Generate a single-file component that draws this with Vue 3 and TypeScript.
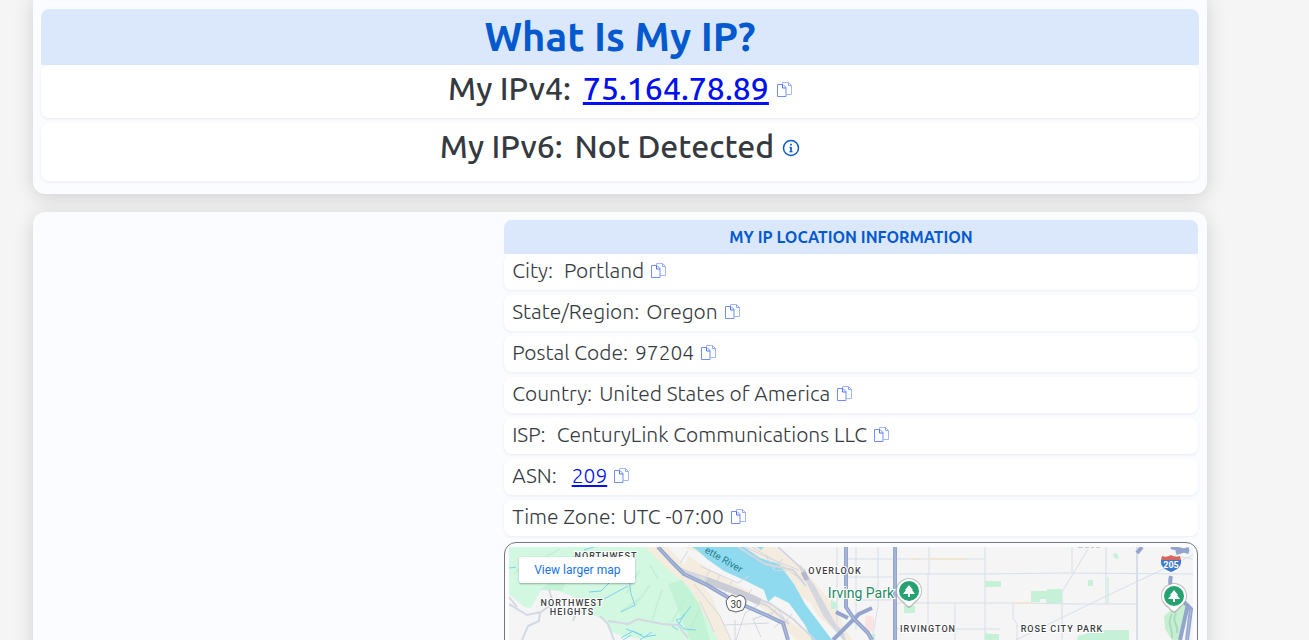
<script setup lang="ts">
interface InfoRow {
  label: string
  value: string
  href?: string
  wide?: boolean
}

const rows: InfoRow[] = [
  { label: 'City:', value: 'Portland', wide: true },
  { label: 'State/Region:', value: 'Oregon' },
  { label: 'Postal Code:', value: '97204' },
  { label: 'Country:', value: 'United States of America' },
  { label: 'ISP:', value: 'CenturyLink Communications LLC', wide: true },
  { label: 'ASN:', value: '209', href: '#asn' },
  { label: 'Time Zone:', value: 'UTC -07:00' },
]

function copy(text: string): void {
  navigator.clipboard?.writeText(text)
}
</script>

<template>
  <main class="page">
    <section class="card summary">
      <h1 class="title">What Is My IP?</h1>
      <div class="ip-row">
        <span>My IPv4:</span>
        <a class="ip" href="#ipv4">75.164.78.89</a>
        <button class="copy" type="button" aria-label="Copy IPv4" @click="copy('75.164.78.89')">
          <svg width="15" height="15" viewBox="0 0 15 15" fill="none" stroke="#7d9bff">
            <path d="M5.500 2V.5h6l3 3v9H9.500" stroke="#a4b8ff" />
            <path d="M11.500.5v3h3" stroke="#8ea8ff" />
            <path d="M.5 2.500H6l3 3v9H.5z" stroke="#6f90fb" />
            <path d="M5.500 3v3H9" stroke="#4d74f8" />
          </svg>
        </button>
      </div>
      <div class="ip-row tall">
        <span>My IPv6:</span>
        <span class="ip">Not Detected</span>
        <button class="copy info" type="button" aria-label="About IPv6">
          <svg width="18" height="18" viewBox="0 0 18 18" fill="none" stroke="#0a5ad0">
            <circle cx="9" cy="9" r="7.500" stroke-width="1.500" />
            <path d="M9 4.800v1.700M9 8v5" stroke-width="1.700" />
            <path d="M7.500 8.200H9M7.300 12.800h3.400" stroke-width="1" />
          </svg>
        </button>
      </div>
    </section>

    <section class="card details">
      <div class="aside"></div>
      <div class="info-col">
        <h2 class="subtitle">MY IP LOCATION INFORMATION</h2>
        <div class="rows">
          <div v-for="row in rows" :key="row.label" class="row">
            <span :class="['label', { wide: row.wide, linked: row.href }]">{{ row.label }}</span>
            <a v-if="row.href" class="asn" :href="row.href">{{ row.value }}</a>
            <span v-else>{{ row.value }}</span>
            <button class="copy" type="button" :aria-label="'Copy ' + row.label" @click="copy(row.value)">
              <svg width="15" height="15" viewBox="0 0 15 15" fill="none" stroke="#7d9bff">
                <path d="M5.500 2V.5h6l3 3v9H9.500" stroke="#a4b8ff" />
                <path d="M11.500.5v3h3" stroke="#8ea8ff" />
                <path d="M.5 2.500H6l3 3v9H.5z" stroke="#6f90fb" />
                <path d="M5.500 3v3H9" stroke="#4d74f8" />
              </svg>
            </button>
          </div>
        </div>

        <div class="map-frame">
          <svg class="map" viewBox="509 547 684 450" preserveAspectRatio="xMinYMin slice" role="img" aria-label="Map of Portland">
            <rect x="509" y="547" width="684" height="450" fill="#f5f5f6" />

            <!-- West hills -->
            <path d="M509 547H655L672 571 690 582 724 640V997H646V640L623 636 610 632 605 621 592 614 588 605 574 597 562 592 549 588 541 590 531 608 524 607 509 594Z" fill="#d3f8e2" />
            <path d="M645 547H668L700 582 712 597 730 640H718L690 588 665 567Z" fill="#f5ece0" />
            <path d="M646 640C642 629 659 630 680 620L716 640Z" fill="#d3f8e2" />
            <path d="M540 590 549 583 566 583 562 591ZM668 584 682 580 700 605 710 640H690Z" fill="#baf0d1" opacity=".65" />
            <g fill="none" stroke="#bfe9d0" stroke-width="2" opacity=".6">
              <path d="M528 560l-14 14M560 549l-18 10M640 570l-14 24M650 585l-16 22M662 590l-10 30M640 598l-20 14M625 560l12 16M650 565l8 14M684 600l-12 22M699 610l-10 22" />
            </g>
            <g fill="none" stroke="#79d2ea" stroke-width="1">
              <path d="M584 550l13-4M573 557l10-2M509 568l7-1M589 592l12-1 17-17 10-2 3-6M604 599l24-13M628 572l3 22 4 11-14 7M621 638l12-7 11 6 12-2M626 629l16 6M691 606l-9 12-6 2M684 614l-6 12M676 620l8 9 12 1" />
              <path d="M672 626l6 4M623 640l8-5M640 640l12-8" />
            </g>
            <g fill="none" stroke="#d3d8e4" stroke-width="2">
              <path d="M509 604l18 11 14-3 12-9-4-14M540 612l-1 9-11 5-6 14M509 597l8 10M588 606l-11 4-4 11M600 616l8 8 6 16M608 621l20 3 10-5 24 5 16 1 10 13" />
            </g>

            <!-- River and industrial banks -->
            <path d="M683 547H775L813 580 834 606 852 640H845L818 616 810 602 789 591 770 579ZM688 556l30 18 46 26 50 40h-17l-42-38-30-13-42-20Z" fill="#f5ece0" />
            <path d="M692 547H744L760 558 779 564 794 584 805 604 832 640H812L805 625 789 603 775 596 768 602 764 590 746 581 724 571 707 559 697 550Z" fill="#8fdaee" />
            <path d="M757 547h7l-3 3z" fill="#8fdaee" />
            <g fill="none" stroke="#d4d7df" stroke-width="2">
              <path d="M676 566l27 14 30 11 36 12 24 16 22 21M680 569l24 8 33 17 31 12 21 18M738 547l27 17 28 6 13 16M778 547l23 21 12 18 17 35" />
              <path d="M700 566l38 17 11-7M688 551l-8 12M710 570l-7 12M733 580l-9 14M752 589l-8 11M745 547l26 12 28 11M752 547l30 18 22 17M766 556l8 14 13 1M783 559l-10 10M795 573l8 7M720 575l-4 8M760 604l-15 9-9 27M774 612l-21 7 8 18M724 625l45-2M735 620v20M771 615l6-7 7 10-10 10M785 623l7-9M694 584l26 32 11 24M700 601l14 31" stroke-width="1" />
              <path d="M800 566l25 50 20 24M803 569l25 50 14 14M812 584l22 40 10 12" stroke-width="3" />
              <path d="M706 580l34 13 20 9" stroke="#c9ccd5" stroke-width="7" />
              <path d="M803 572l4 8" stroke="#b3b9cb" stroke-width="5" />
            </g>

            <!-- Street grid -->
            <g fill="none" stroke="#d6dfe9" stroke-width="1">
              <path d="M837 547V632M856 547V630M878 547V606L872 640M898 574H985L1065 573 1193 574M846 559H985M895 603H1021L1076 604H1136M928 574V630M929 547v27M985 547V640M955 604V640M1072 547V572M1106 547V604M1062 605V640M846 577H894M855 600h36M895 629H1000" />
              <path d="M1137 547V640" stroke-width="2" />
              <path d="M1088 549L1062 592V605M1016 640L1094 602 1193 555M1013 603V618L1017 624V640M1174 556l19 3" />
              <path d="M1108 577V603" stroke="#bdecd0" />
              <path d="M909 559h12M926 559h40M1012 603h22" stroke="#efe7d5" stroke-width="2" />
            </g>
            <g fill="#c6f0d7">
              <path d="M904 606h11v7h-11zM985 581h16v6h-16zM985 633l5 1h9v6h-14zM869 634h6v6h-6zM831 600l6 3v6h-6zM1031 591h16v-2h15v14h-16v-4h-6v3h-9zM1113 554l4-1 2 6-5-1zM1088 580h5v6h-5zM1077 640l1-4 21-6h30v10z" />
            </g>
            <path d="M866 615l8 2v14l-10 1z" fill="#fbe3e1" />
            <path d="M1170 611l17-8-6 37h-9l-7-11-1-13z" fill="#c6efd1" />
            <path d="M1172 614c-6 10 1 12 0 24M1176 613c-5 9 3 12 1 20" fill="none" stroke="#abd9c2" stroke-width="2" />

            <!-- Highways -->
            <g fill="none" stroke="#93a5cd" stroke-width="4" stroke-linejoin="round">
              <path d="M658 547l13 14 13 13 23 11 27 16 32 14 17 8 5 17M846 547v60l8 12 14 14 4 7M895 547v93M836 612l12 6M872 608l-13 6-26 26M1171 576c-3 12 3 17 8 21l12 12-4 31M1180 640l8-36" />
              <path d="M1171 547l18 5M1176 553l13-4M1137 553l5-6" />
            </g>
            <g fill="none" stroke="#b5c2df" stroke-width="1">
              <path d="M658 547l13 14 13 13 23 11 27 16 32 14 17 8 5 17M846 547v60l8 12 14 14 4 7M895 547v93M1191 609l-4 31" />
            </g>

            <!-- Shields -->
            <path d="M729 597l3-2 4 2 4-2 4 2 2 4-1 5-2 4-7 2-7-2-2-4-1-5z" fill="#fff" stroke="#5c6066" />
            <text x="736" y="608" class="shield">30</text>
            <path d="M1162 556c3 1 6 1 9-1 3 2 6 2 9 1l1 4h-20z" fill="#d9655c" />
            <path d="M1161 560h20c1 7-5 10-10 12-5-2-11-5-10-12z" fill="#3f7bcb" />
            <text x="1171" y="568" class="shield interstate">205</text>

            <!-- Park pins -->
            <g v-for="pin in [[909, 591], [1174, 596]]" :key="pin[0]" :transform="`translate(${pin[0]} ${pin[1]})`">
              <path d="M0 17c-2 0-4-3-6-5C-10 9-13 5-13 0a13 13 0 0126 0c0 5-3 9-7 12-2 2-4 5-6 5z" fill="#a6aaa9" opacity=".7" />
              <path d="M0 15c-2 0-3-2-5-4C-9 8-12 5-12 0a12 12 0 0124 0c0 5-3 8-7 11-2 2-3 4-5 4z" fill="#fff" />
              <circle r="10" fill="#25a26f" />
              <path d="M0-6l4 5H3l3 4H1v3h-2V3h-5l3-4h-1z" fill="#fff" />
            </g>

            <text x="606" y="559" class="area">NORTHWEST</text>
            <text x="572" y="606" class="area">NORTHWEST</text>
            <text x="572" y="615" class="area">HEIGHTS</text>
            <text x="835" y="574" class="area">OVERLOOK</text>
            <text x="928" y="632" class="area">IRVINGTON</text>
            <text x="1062" y="632" class="area">ROSE CITY PARK</text>
            <text x="894" y="598" class="park">Irving Park</text>
            <text class="river" transform="translate(704 552) rotate(30)">ette River</text>
            <path d="M1078 547h5M1085 547h4M1091 547h3M1096 547h4" stroke="#9a9da1" stroke-width="1" />
          </svg>
          <a class="larger" href="#map">View larger map</a>
        </div>
      </div>
    </section>
  </main>
</template>

<style>
body {
  background: #f5f5f5;
}
</style>

<style scoped>
.page {
  box-sizing: border-box;
  height: 100vh;
  overflow: hidden;
  padding: 0 102px 0 33px;
  font-family: Ubuntu, "Open Sans", "Noto Sans", sans-serif;
  color: #343a40;
}
.card {
  padding: 8px;
  background: #fbfcff;
  border-radius: 12px;
  box-shadow: 0 4px 20px rgba(0, 0, 0, 0.15);
}
.summary {
  margin-top: -8px;
  padding: 17px 8px 13px;
}
.title,
.subtitle {
  margin: 0;
  background: #dbe8fb;
  color: #0459cf;
  font-weight: 700;
  text-align: center;
  border-radius: 8px 8px 0 0;
}
.title {
  font-size: 40px;
  line-height: 56px;
}
.ip-row {
  display: flex;
  align-items: center;
  justify-content: center;
  height: 53px;
  padding-bottom: 7px;
  box-sizing: border-box;
  background: #fff;
  border-radius: 8px;
  box-shadow: 0 1px 3px rgba(30, 50, 80, 0.08);
  font-size: 32px;
  font-weight: 500;
  line-height: 40px;
}
.ip-row.tall {
  height: 58px;
  margin-top: 5px;
  padding-bottom: 12px;
}
.ip {
  margin-left: 12px;
}
a.ip,
.asn {
  color: #0010f0;
  text-decoration: underline;
}
.copy {
  display: flex;
  margin-left: 8px;
  padding: 0;
  border: 0;
  background: none;
  cursor: pointer;
}
.ip-row .copy {
  margin-top: 3px;
}
.details {
  display: grid;
  grid-template-columns: 2fr 3fr;
  margin-top: 18px;
}
.info-col {
  padding-right: 1px;
}
.subtitle {
  font-size: 16px;
  line-height: 34px;
}
.rows {
  display: grid;
  gap: 5px;
}
.row {
  display: flex;
  align-items: center;
  height: 36px;
  padding: 0 8px 4px;
  box-sizing: border-box;
  background: #fff;
  border-radius: 8px;
  box-shadow: 0 1px 3px rgba(30, 50, 80, 0.08);
  font-size: 21px;
  font-weight: 300;
  line-height: 24px;
}
.row .copy {
  margin-left: 7px;
}
.label {
  margin-right: 7px;
}
.label.wide {
  margin-right: 11px;
}
.label.linked {
  margin-right: 15px;
}
.map-frame {
  position: relative;
  margin-top: 6px;
  padding: 4px;
  border: 1px solid #777;
  border-radius: 12px;
}
.map {
  display: block;
  width: 100%;
  height: 450px;
}
.larger {
  position: absolute;
  top: 14px;
  left: 14px;
  padding: 0 15px;
  background: #fff;
  box-shadow: 0 1px 2px rgba(0, 0, 0, 0.3);
  border-radius: 2px;
  color: #1a73e8;
  font: 12px/26px Roboto, sans-serif;
  text-decoration: none;
}
.map text {
  font-family: Roboto, sans-serif;
  text-anchor: middle;
  paint-order: stroke;
  stroke: #fff;
  stroke-width: 2px;
}
.map .area {
  font-size: 9px;
  font-weight: 500;
  letter-spacing: 1px;
  fill: #3c4043;
}
.map .park {
  font-size: 14px;
  text-anchor: end;
  fill: #1f8a62;
}
.map .river {
  font-size: 10px;
  text-anchor: start;
  fill: #277f93;
  stroke: none;
}
.map .shield {
  font-size: 10px;
  fill: #3c4043;
  stroke: none;
}
.map .interstate {
  font-size: 9px;
  font-weight: 700;
  fill: #fff;
}
</style>
